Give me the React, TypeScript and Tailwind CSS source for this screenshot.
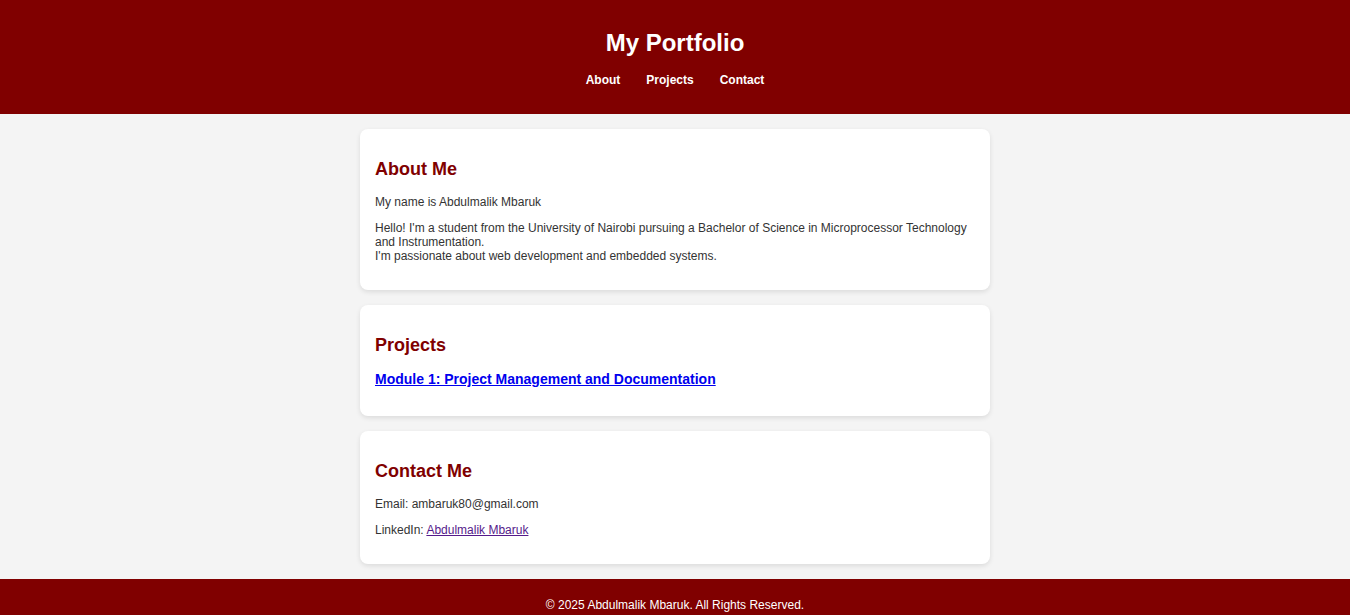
export default function App() {
  return (
    <div className="min-h-screen bg-[#f4f4f4] font-['Liberation_Sans',Arial,sans-serif] text-[12px] text-[#333]">
      {/* Header */}
      <header className="flex flex-col items-center bg-[#800000] pt-[29px] pb-[27px] text-white">
        <h1 className="text-[24px] font-bold leading-[28px]">My Portfolio</h1>
        <nav className="mt-[16px] flex gap-[26px] text-[12px] font-bold leading-[14px]">
          <a href="#about">About</a>
          <a href="#projects">Projects</a>
          <a href="#contact">Contact</a>
        </nav>
      </header>

      <main className="mx-auto flex w-[630px] flex-col gap-[15px] py-[15px]">
        <section id="about" className="rounded-lg bg-white px-[15px] pt-[30px] pb-[27px] shadow-[0_2px_5px_rgba(0,0,0,0.1)]">
          <h2 className="text-[18px] font-bold leading-[21px] text-[#800000]">About Me</h2>
          <p className="mt-[15px] leading-[14px]">My name is Abdulmalik Mbaruk</p>
          <p className="mt-[12px] leading-[14px]">
            Hello! I'm a student from the University of Nairobi pursuing a Bachelor of Science in Microprocessor Technology and Instrumentation.
            <br />
            I'm passionate about web development and embedded systems.
          </p>
        </section>

        <section id="projects" className="rounded-lg bg-white px-[15px] pt-[30px] pb-[29px] shadow-[0_2px_5px_rgba(0,0,0,0.1)]">
          <h2 className="text-[18px] font-bold leading-[21px] text-[#800000]">Projects</h2>
          <h3 className="mt-[15px] text-[14px] font-bold leading-[16px]">
            <a href="#" className="text-[#0000ee] underline">
              Module 1: Project Management and Documentation
            </a>
          </h3>
        </section>

        <section id="contact" className="rounded-lg bg-white px-[15px] pt-[30px] pb-[27px] shadow-[0_2px_5px_rgba(0,0,0,0.1)]">
          <h2 className="text-[18px] font-bold leading-[21px] text-[#800000]">Contact Me</h2>
          <p className="mt-[15px] leading-[14px]">Email: ambaruk80@gmail.com</p>
          <p className="mt-[12px] leading-[14px]">
            LinkedIn:{" "}
            <a href="#" className="text-[#551a8b] underline">
              Abdulmalik Mbaruk
            </a>
          </p>
        </section>
      </main>

      <footer className="bg-[#800000] pt-[19px] pb-[18px] text-center leading-[14px] text-white">
        <p>© 2025 Abdulmalik Mbaruk. All Rights Reserved.</p>
      </footer>
    </div>
  );
}
